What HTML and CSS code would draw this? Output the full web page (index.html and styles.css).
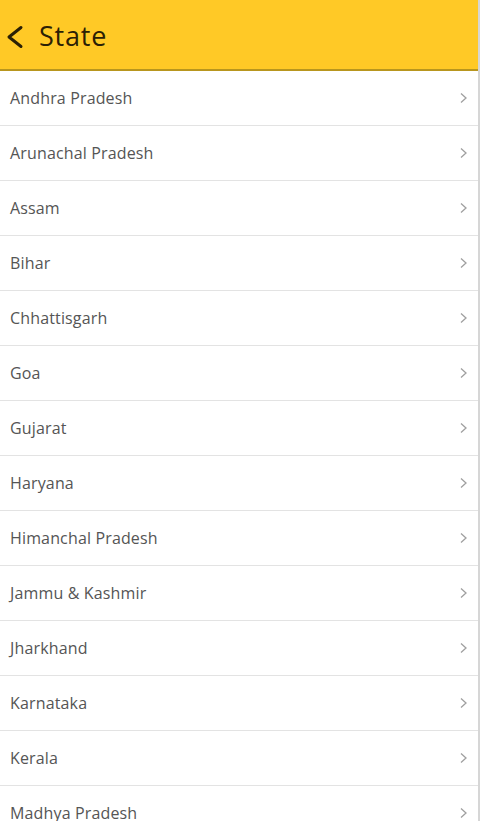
FILE: index.html
```html
<!DOCTYPE html>
<html>
<head>
<meta charset="utf-8">
<link rel="stylesheet" href="styles.css">
</head>
<body>
<div class="app">
  <header class="header">
    <svg class="back" width="20" height="24" viewBox="0 0 20 24"><path d="M16 2.5 L4 12 L16 21.5" fill="none" stroke="#2b2005" stroke-width="3" stroke-linecap="round" stroke-linejoin="round"/></svg>
    <span class="title">State</span>
  </header>
  <ul class="list">
    <li class="row"><span>Andhra Pradesh</span><svg class="chev" width="9" height="12" viewBox="0 0 9 12"><path d="M2 1.5 L7 6 L2 10.5" fill="none" stroke="#a0a0a0" stroke-width="1.3"/></svg></li>
    <li class="row"><span>Arunachal Pradesh</span><svg class="chev" width="9" height="12" viewBox="0 0 9 12"><path d="M2 1.5 L7 6 L2 10.5" fill="none" stroke="#a0a0a0" stroke-width="1.3"/></svg></li>
    <li class="row"><span>Assam</span><svg class="chev" width="9" height="12" viewBox="0 0 9 12"><path d="M2 1.5 L7 6 L2 10.5" fill="none" stroke="#a0a0a0" stroke-width="1.3"/></svg></li>
    <li class="row"><span>Bihar</span><svg class="chev" width="9" height="12" viewBox="0 0 9 12"><path d="M2 1.5 L7 6 L2 10.5" fill="none" stroke="#a0a0a0" stroke-width="1.3"/></svg></li>
    <li class="row"><span>Chhattisgarh</span><svg class="chev" width="9" height="12" viewBox="0 0 9 12"><path d="M2 1.5 L7 6 L2 10.5" fill="none" stroke="#a0a0a0" stroke-width="1.3"/></svg></li>
    <li class="row"><span>Goa</span><svg class="chev" width="9" height="12" viewBox="0 0 9 12"><path d="M2 1.5 L7 6 L2 10.5" fill="none" stroke="#a0a0a0" stroke-width="1.3"/></svg></li>
    <li class="row"><span>Gujarat</span><svg class="chev" width="9" height="12" viewBox="0 0 9 12"><path d="M2 1.5 L7 6 L2 10.5" fill="none" stroke="#a0a0a0" stroke-width="1.3"/></svg></li>
    <li class="row"><span>Haryana</span><svg class="chev" width="9" height="12" viewBox="0 0 9 12"><path d="M2 1.5 L7 6 L2 10.5" fill="none" stroke="#a0a0a0" stroke-width="1.3"/></svg></li>
    <li class="row"><span>Himanchal Pradesh</span><svg class="chev" width="9" height="12" viewBox="0 0 9 12"><path d="M2 1.5 L7 6 L2 10.5" fill="none" stroke="#a0a0a0" stroke-width="1.3"/></svg></li>
    <li class="row"><span>Jammu &amp; Kashmir</span><svg class="chev" width="9" height="12" viewBox="0 0 9 12"><path d="M2 1.5 L7 6 L2 10.5" fill="none" stroke="#a0a0a0" stroke-width="1.3"/></svg></li>
    <li class="row"><span>Jharkhand</span><svg class="chev" width="9" height="12" viewBox="0 0 9 12"><path d="M2 1.5 L7 6 L2 10.5" fill="none" stroke="#a0a0a0" stroke-width="1.3"/></svg></li>
    <li class="row"><span>Karnataka</span><svg class="chev" width="9" height="12" viewBox="0 0 9 12"><path d="M2 1.5 L7 6 L2 10.5" fill="none" stroke="#a0a0a0" stroke-width="1.3"/></svg></li>
    <li class="row"><span>Kerala</span><svg class="chev" width="9" height="12" viewBox="0 0 9 12"><path d="M2 1.5 L7 6 L2 10.5" fill="none" stroke="#a0a0a0" stroke-width="1.3"/></svg></li>
    <li class="row"><span>Madhya Pradesh</span><svg class="chev" width="9" height="12" viewBox="0 0 9 12"><path d="M2 1.5 L7 6 L2 10.5" fill="none" stroke="#a0a0a0" stroke-width="1.3"/></svg></li>
  </ul>
</div>
</body>
</html>
```
FILE: styles.css
```css
html, body {
  margin: 0;
  padding: 0;
  background: #fff;
  overflow: hidden;
}
.app {
  width: 480px;
  height: 821px;
  overflow: hidden;
  font-family: "Open Sans", "Noto Sans", sans-serif;
  border-right: 2px solid #d6d6d6;
  box-sizing: border-box;
}
.header {
  height: 69px;
  background: #ffc926;
  border-bottom: 2px solid #b8961e;
  display: flex;
  align-items: center;
  padding-left: 5px;
  gap: 14px;
}
.back {
  display: block;
  margin-top: 4px;
}
.title {
  font-size: 27px;
  letter-spacing: 0.8px;
  color: #2b2005;
  line-height: 1;
  margin-top: 2px;
}
.list {
  list-style: none;
  margin: 0;
  padding: 0;
}
.row {
  height: 54px;
  border-bottom: 1px solid #e3e3e3;
  display: flex;
  align-items: center;
  justify-content: space-between;
  padding: 0 10px 0 10px;
  font-size: 16px;
  letter-spacing: 0.15px;
  color: #555;
}
.chev {
  display: block;
}
```
